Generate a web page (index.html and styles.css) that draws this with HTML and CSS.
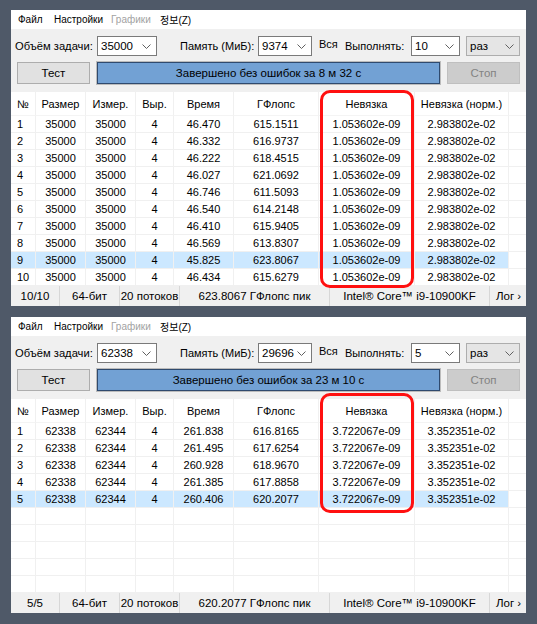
FILE: index.html
```html
<!DOCTYPE html>
<html lang="ru">
<head>
<meta charset="utf-8">
<title>Linpack</title>
<link rel="stylesheet" href="styles.css">
</head>
<body>
<div class="page">

<section class="win">
  <nav class="menu">
    <span class="mi m1">Файл</span><span class="mi m2">Настройки</span><span class="mi m3 dis">Графики</span><span class="mi">정보(Z)</span>
  </nav>
  <div class="tools">
    <div class="row1">
      <span class="lbl l-size">Объём задачи:</span>
      <div class="combo c-size"><span>35000</span><svg class="chev" viewBox="0 0 9 5"><path d="M0.5 0.5 L4.5 4.5 L8.5 0.5"/></svg></div>
      <span class="lbl l-mem">Память (МиБ):</span>
      <div class="combo c-mem"><span>9374</span><svg class="chev" viewBox="0 0 9 5"><path d="M0.5 0.5 L4.5 4.5 L8.5 0.5"/></svg></div>
      <span class="lbl l-all">Вся</span>
      <span class="lbl l-run">Выполнять:</span>
      <div class="combo c-run"><span>10</span><svg class="chev" viewBox="0 0 9 5"><path d="M0.5 0.5 L4.5 4.5 L8.5 0.5"/></svg></div>
      <div class="combo drop c-unit"><span>раз</span><svg class="chev" viewBox="0 0 9 5"><path d="M0.5 0.5 L4.5 4.5 L8.5 0.5"/></svg></div>
    </div>
    <div class="row2">
      <div class="btn">Тест</div>
      <div class="progress">Завершено без ошибок за 8 м 32 с</div>
      <div class="btn off">Стоп</div>
    </div>
  </div>
  <div class="grid">
    <div class="tr th"><span class="c-no">№</span><span>Размер</span><span>Измер.</span><span>Выр.</span><span>Время</span><span>ГФлопс</span><span>Невязка</span><span>Невязка (норм.)</span><span class="fill"></span></div>
    <div class="tr"><span class="c-no">1</span><span>35000</span><span>35000</span><span>4</span><span>46.470</span><span>615.1511</span><span>1.053602e-09</span><span>2.983802e-02</span><span class="fill"></span></div>
    <div class="tr"><span class="c-no">2</span><span>35000</span><span>35000</span><span>4</span><span>46.332</span><span>616.9737</span><span>1.053602e-09</span><span>2.983802e-02</span><span class="fill"></span></div>
    <div class="tr"><span class="c-no">3</span><span>35000</span><span>35000</span><span>4</span><span>46.222</span><span>618.4515</span><span>1.053602e-09</span><span>2.983802e-02</span><span class="fill"></span></div>
    <div class="tr"><span class="c-no">4</span><span>35000</span><span>35000</span><span>4</span><span>46.027</span><span>621.0692</span><span>1.053602e-09</span><span>2.983802e-02</span><span class="fill"></span></div>
    <div class="tr"><span class="c-no">5</span><span>35000</span><span>35000</span><span>4</span><span>46.746</span><span>611.5093</span><span>1.053602e-09</span><span>2.983802e-02</span><span class="fill"></span></div>
    <div class="tr"><span class="c-no">6</span><span>35000</span><span>35000</span><span>4</span><span>46.540</span><span>614.2148</span><span>1.053602e-09</span><span>2.983802e-02</span><span class="fill"></span></div>
    <div class="tr"><span class="c-no">7</span><span>35000</span><span>35000</span><span>4</span><span>46.410</span><span>615.9405</span><span>1.053602e-09</span><span>2.983802e-02</span><span class="fill"></span></div>
    <div class="tr"><span class="c-no">8</span><span>35000</span><span>35000</span><span>4</span><span>46.569</span><span>613.8307</span><span>1.053602e-09</span><span>2.983802e-02</span><span class="fill"></span></div>
    <div class="tr sel"><span class="c-no">9</span><span>35000</span><span>35000</span><span>4</span><span>45.825</span><span>623.8067</span><span>1.053602e-09</span><span>2.983802e-02</span><span class="fill"></span></div>
    <div class="tr"><span class="c-no">10</span><span>35000</span><span>35000</span><span>4</span><span>46.434</span><span>615.6279</span><span>1.053602e-09</span><span>2.983802e-02</span><span class="fill"></span></div>
  </div>
  <div class="status">
    <span class="s1">10/10</span><span class="s2">64-бит</span><span class="s3">20 потоков</span><span class="s4">623.8067 ГФлопс пик</span><span class="s5">Intel® Core™ i9-10900KF</span><span class="s6">Лог ›</span>
  </div>
  <div class="mark mark-a"></div>
</section>

<section class="win">
  <nav class="menu">
    <span class="mi m1">Файл</span><span class="mi m2">Настройки</span><span class="mi m3 dis">Графики</span><span class="mi">정보(Z)</span>
  </nav>
  <div class="tools">
    <div class="row1">
      <span class="lbl l-size">Объём задачи:</span>
      <div class="combo c-size"><span>62338</span><svg class="chev" viewBox="0 0 9 5"><path d="M0.5 0.5 L4.5 4.5 L8.5 0.5"/></svg></div>
      <span class="lbl l-mem">Память (МиБ):</span>
      <div class="combo c-mem"><span>29696</span><svg class="chev" viewBox="0 0 9 5"><path d="M0.5 0.5 L4.5 4.5 L8.5 0.5"/></svg></div>
      <span class="lbl l-all">Вся</span>
      <span class="lbl l-run">Выполнять:</span>
      <div class="combo c-run"><span>5</span><svg class="chev" viewBox="0 0 9 5"><path d="M0.5 0.5 L4.5 4.5 L8.5 0.5"/></svg></div>
      <div class="combo drop c-unit"><span>раз</span><svg class="chev" viewBox="0 0 9 5"><path d="M0.5 0.5 L4.5 4.5 L8.5 0.5"/></svg></div>
    </div>
    <div class="row2">
      <div class="btn">Тест</div>
      <div class="progress">Завершено без ошибок за 23 м 10 с</div>
      <div class="btn off">Стоп</div>
    </div>
  </div>
  <div class="grid">
    <div class="tr th"><span class="c-no">№</span><span>Размер</span><span>Измер.</span><span>Выр.</span><span>Время</span><span>ГФлопс</span><span>Невязка</span><span>Невязка (норм.)</span><span class="fill"></span></div>
    <div class="tr"><span class="c-no">1</span><span>62338</span><span>62344</span><span>4</span><span>261.838</span><span>616.8165</span><span>3.722067e-09</span><span>3.352351e-02</span><span class="fill"></span></div>
    <div class="tr"><span class="c-no">2</span><span>62338</span><span>62344</span><span>4</span><span>261.495</span><span>617.6254</span><span>3.722067e-09</span><span>3.352351e-02</span><span class="fill"></span></div>
    <div class="tr"><span class="c-no">3</span><span>62338</span><span>62344</span><span>4</span><span>260.928</span><span>618.9670</span><span>3.722067e-09</span><span>3.352351e-02</span><span class="fill"></span></div>
    <div class="tr"><span class="c-no">4</span><span>62338</span><span>62344</span><span>4</span><span>261.385</span><span>617.8858</span><span>3.722067e-09</span><span>3.352351e-02</span><span class="fill"></span></div>
    <div class="tr sel"><span class="c-no">5</span><span>62338</span><span>62344</span><span>4</span><span>260.406</span><span>620.2077</span><span>3.722067e-09</span><span>3.352351e-02</span><span class="fill"></span></div>
    <div class="tr"><span class="c-no"></span><span></span><span></span><span></span><span></span><span></span><span></span><span></span><span class="fill"></span></div>
    <div class="tr"><span class="c-no"></span><span></span><span></span><span></span><span></span><span></span><span></span><span></span><span class="fill"></span></div>
    <div class="tr"><span class="c-no"></span><span></span><span></span><span></span><span></span><span></span><span></span><span></span><span class="fill"></span></div>
    <div class="tr"><span class="c-no"></span><span></span><span></span><span></span><span></span><span></span><span></span><span></span><span class="fill"></span></div>
    <div class="tr"><span class="c-no"></span><span></span><span></span><span></span><span></span><span></span><span></span><span></span><span class="fill"></span></div>
  </div>
  <div class="status">
    <span class="s1">5/5</span><span class="s2">64-бит</span><span class="s3">20 потоков</span><span class="s4">620.2077 ГФлопс пик</span><span class="s5">Intel® Core™ i9-10900KF</span><span class="s6">Лог ›</span>
  </div>
  <div class="mark mark-b"></div>
</section>

</div>
</body>
</html>
```
FILE: styles.css
```css
* { box-sizing: border-box; }

html, body {
  margin: 0;
  padding: 0;
  background: #4f5968;
}

body {
  font-family: "Liberation Sans", "Noto Sans CJK KR", sans-serif;
  font-size: 11px;
  color: #000;
}

.page {
  width: 537px;
  height: 624px;
  padding: 10px 11px 0 11px;
  display: flex;
  flex-direction: column;
  gap: 11px;
}

.win {
  position: relative;
  width: 515px;
  height: 296px;
  background: #f0f0f0;
  display: flex;
  flex-direction: column;
}

/* menu */
.menu {
  height: 19px;
  background: #fff;
  display: flex;
  align-items: center;
  padding-left: 7px;
  font-size: 10px;
}
.mi { white-space: nowrap; }
.m1 { width: 36px; }
.m2 { width: 57px; }
.m3 { width: 49px; }
.mi.dis { color: #a2a2a2; }

/* toolbar */
.tools {
  height: 63px;
  padding: 7px 6px 8px 4px;
  display: flex;
  flex-direction: column;
  gap: 6px;
}
.row1 {
  height: 20px;
  display: flex;
  align-items: center;
}
.lbl { white-space: nowrap; }
.l-size { width: 82px; font-size: 11.2px; }
.l-mem { margin-left: 23px; width: 78px; font-size: 11px; }
.l-all { margin-left: 7px; width: 26px; margin-bottom: 5px; }
.l-run { width: 66px; }

.combo {
  height: 20px;
  background: #fff;
  border: 1px solid #7a7a7a;
  display: flex;
  align-items: center;
  justify-content: space-between;
  padding: 0 5px 0 3px;
  font-size: 11.5px;
}
.combo.drop {
  background: #e5e5e5;
  border-color: #adadad;
}
.c-size { width: 60px; }
.c-mem { width: 54px; }
.c-run { width: 49px; }
.c-unit { width: 54px; margin-left: 6px; }

.chev {
  width: 9px;
  height: 5px;
  fill: none;
  stroke: #606060;
  stroke-width: 1;
}

.row2 {
  height: 22px;
  display: flex;
  gap: 7px;
  padding-left: 2px;
}
.btn {
  width: 73px;
  height: 22px;
  background: #e1e1e1;
  border: 1px solid #adadad;
  display: flex;
  align-items: center;
  justify-content: center;
  font-size: 11.5px;
}
.btn.off {
  background: #cccccc;
  border-color: #bfbfbf;
  color: #838383;
}
.progress {
  width: 343px;
  height: 22px;
  background: #72a1d4;
  border: 1px solid #2f4a6e;
  box-shadow: 0 0 0 1px #bcbcbc;
  display: flex;
  align-items: center;
  justify-content: center;
  font-size: 11.5px;
}

/* table */
.grid {
  background: #fff;
  display: flex;
  flex-direction: column;
}
.tr {
  display: grid;
  grid-template-columns: 25px 50px 50px 38px 60px 85px 96px 94px 1fr;
  height: 17px;
}
.tr > span {
  border-right: 1px solid #f0f0f0;
  border-bottom: 1px solid #f0f0f0;
  display: flex;
  align-items: center;
  justify-content: center;
  white-space: nowrap;
}
.tr > .c-no {
  justify-content: flex-start;
  padding-left: 6px;
}
.tr > .fill { border-right: none; }
.tr.th { height: 24px; }
.tr.th > span { border-bottom-color: #f4f4f4; }
.tr.sel > span:not(.fill) { background: #cce8ff; }

/* status bar */
.status {
  height: 20px;
  background: #f0f0f0;
  display: flex;
  align-items: center;
}
.status > span {
  height: 100%;
  display: flex;
  align-items: center;
  justify-content: center;
  border-right: 1px solid #d7d7d7;
  white-space: nowrap;
  font-size: 11.5px;
}
.s1 { width: 49px; }
.s2 { width: 60px; }
.s3 { width: 60px; }
.s4 { width: 150px; }
.s5 { width: 160px; }
.s6 { flex: 1; border-right: none !important; justify-content: flex-start !important; padding-left: 6px; }

/* red highlight frame */
.mark {
  position: absolute;
  left: 309px;
  width: 94px;
  border: 3px solid #ff1010;
  border-radius: 10px;
}
.mark-a { top: 80px; height: 198px; }
.mark-b { top: 76px; height: 120px; }
```
